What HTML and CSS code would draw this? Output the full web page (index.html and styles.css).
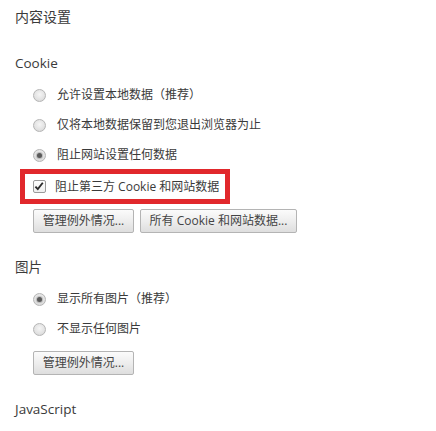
FILE: index.html
```
<!DOCTYPE html>
<html lang="zh-CN">
<head>
<meta charset="utf-8">
<title>内容设置</title>
<link rel="stylesheet" href="styles.css">
</head>
<body>
<div class="page">
  <div class="title">内容设置</div>

  <div class="section-head">Cookie</div>
  <div class="options">
    <div class="opt"><span class="radio"></span><span class="label">允许设置本地数据（推荐）</span></div>
    <div class="opt"><span class="radio"></span><span class="label">仅将本地数据保留到您退出浏览器为止</span></div>
    <div class="opt"><span class="radio checked"></span><span class="label">阻止网站设置任何数据</span></div>
  </div>
  <div class="highlight">
    <span class="check"><svg viewBox="0 0 13 13" width="13" height="13"><path d="M2.6 6.6 L5.2 9.4 L10.6 2.4" fill="none" stroke="#2b2b2b" stroke-width="2"/></svg></span>
    <span class="label">阻止第三方 Cookie 和网站数据</span>
  </div>
  <div class="buttons">
    <button class="btn btn-a">管理例外情况...</button>
    <button class="btn btn-b">所有 Cookie 和网站数据...</button>
  </div>

  <div class="section-head gap">图片</div>
  <div class="options">
    <div class="opt"><span class="radio checked"></span><span class="label">显示所有图片（推荐）</span></div>
    <div class="opt"><span class="radio"></span><span class="label">不显示任何图片</span></div>
  </div>
  <div class="buttons buttons-b">
    <button class="btn btn-a">管理例外情况...</button>
  </div>

  <div class="section-head gap">JavaScript</div>
  <div class="options options-js">
    <div class="opt"><span class="radio checked"></span><span class="label">允许所有网站运行 JavaScript（推荐）</span></div>
  </div>
</div>
</body>
</html>
```
FILE: styles.css
```
html, body {
  margin: 0;
  padding: 0;
  background: #ffffff;
  height: 431px;
  overflow: hidden;
}

.page {
  padding: 7px 0 0 15px;
  font-family: "Open Sans", "Noto Sans CJK SC", sans-serif;
  color: #3a3a3a;
}

.title {
  font-size: 14px;
  line-height: 20px;
  height: 20px;
}

.section-head {
  margin-top: 26px;
  font-size: 13.5px;
  line-height: 20px;
  height: 20px;
}

.section-head.gap {
  margin-top: 24px;
}

.options {
  margin-top: 7px;
  padding-left: 18px;
}

.opt {
  display: flex;
  align-items: center;
  height: 30px;
}

.label {
  font-size: 12px;
  line-height: 16px;
  color: #3a3a3a;
  white-space: nowrap;
}

.radio {
  box-sizing: border-box;
  width: 13px;
  height: 13px;
  border-radius: 50%;
  border: 1px solid #b5b5b5;
  background: radial-gradient(circle at 50% 40%, #f5f5f5 0%, #e2e2e2 60%, #d0d0d0 100%);
  margin-right: 11px;
  display: flex;
  align-items: center;
  justify-content: center;
  flex: none;
}

.radio.checked::after {
  content: "";
  width: 5px;
  height: 5px;
  border-radius: 50%;
  background: #5a5a5a;
  box-shadow: 0 0 1px 1px rgba(90, 90, 90, 0.35);
}

.highlight {
  box-sizing: border-box;
  margin: -1px 0 0 5px;
  width: 210px;
  height: 35px;
  border: 5px solid #e1282c;
  display: flex;
  align-items: center;
  padding-left: 8px;
}

.check {
  box-sizing: border-box;
  width: 13px;
  height: 13px;
  border: 1px solid #9a9a9a;
  background: linear-gradient(#ffffff, #eeeeee);
  border-radius: 2px;
  margin-right: 9px;
  display: flex;
  flex: none;
}

.check svg {
  margin: -1px 0 0 -1px;
}

.buttons {
  display: flex;
  gap: 6px;
  margin: 5px 0 0 18px;
}

.buttons-b {
  margin-top: 7px;
}

.btn {
  box-sizing: border-box;
  height: 24px;
  padding: 0;
  border: 1px solid #b4b4b4;
  border-radius: 2px;
  background: linear-gradient(#fbfbfb, #ececec 55%, #dedede);
  font-family: "Open Sans", "Noto Sans CJK SC", sans-serif;
  font-size: 12px;
  color: #444444;
  line-height: 22px;
  white-space: nowrap;
}

.btn-a {
  width: 101px;
}

.btn-b {
  width: 157px;
}

.options-js {
  margin-top: 5px;
}
```
